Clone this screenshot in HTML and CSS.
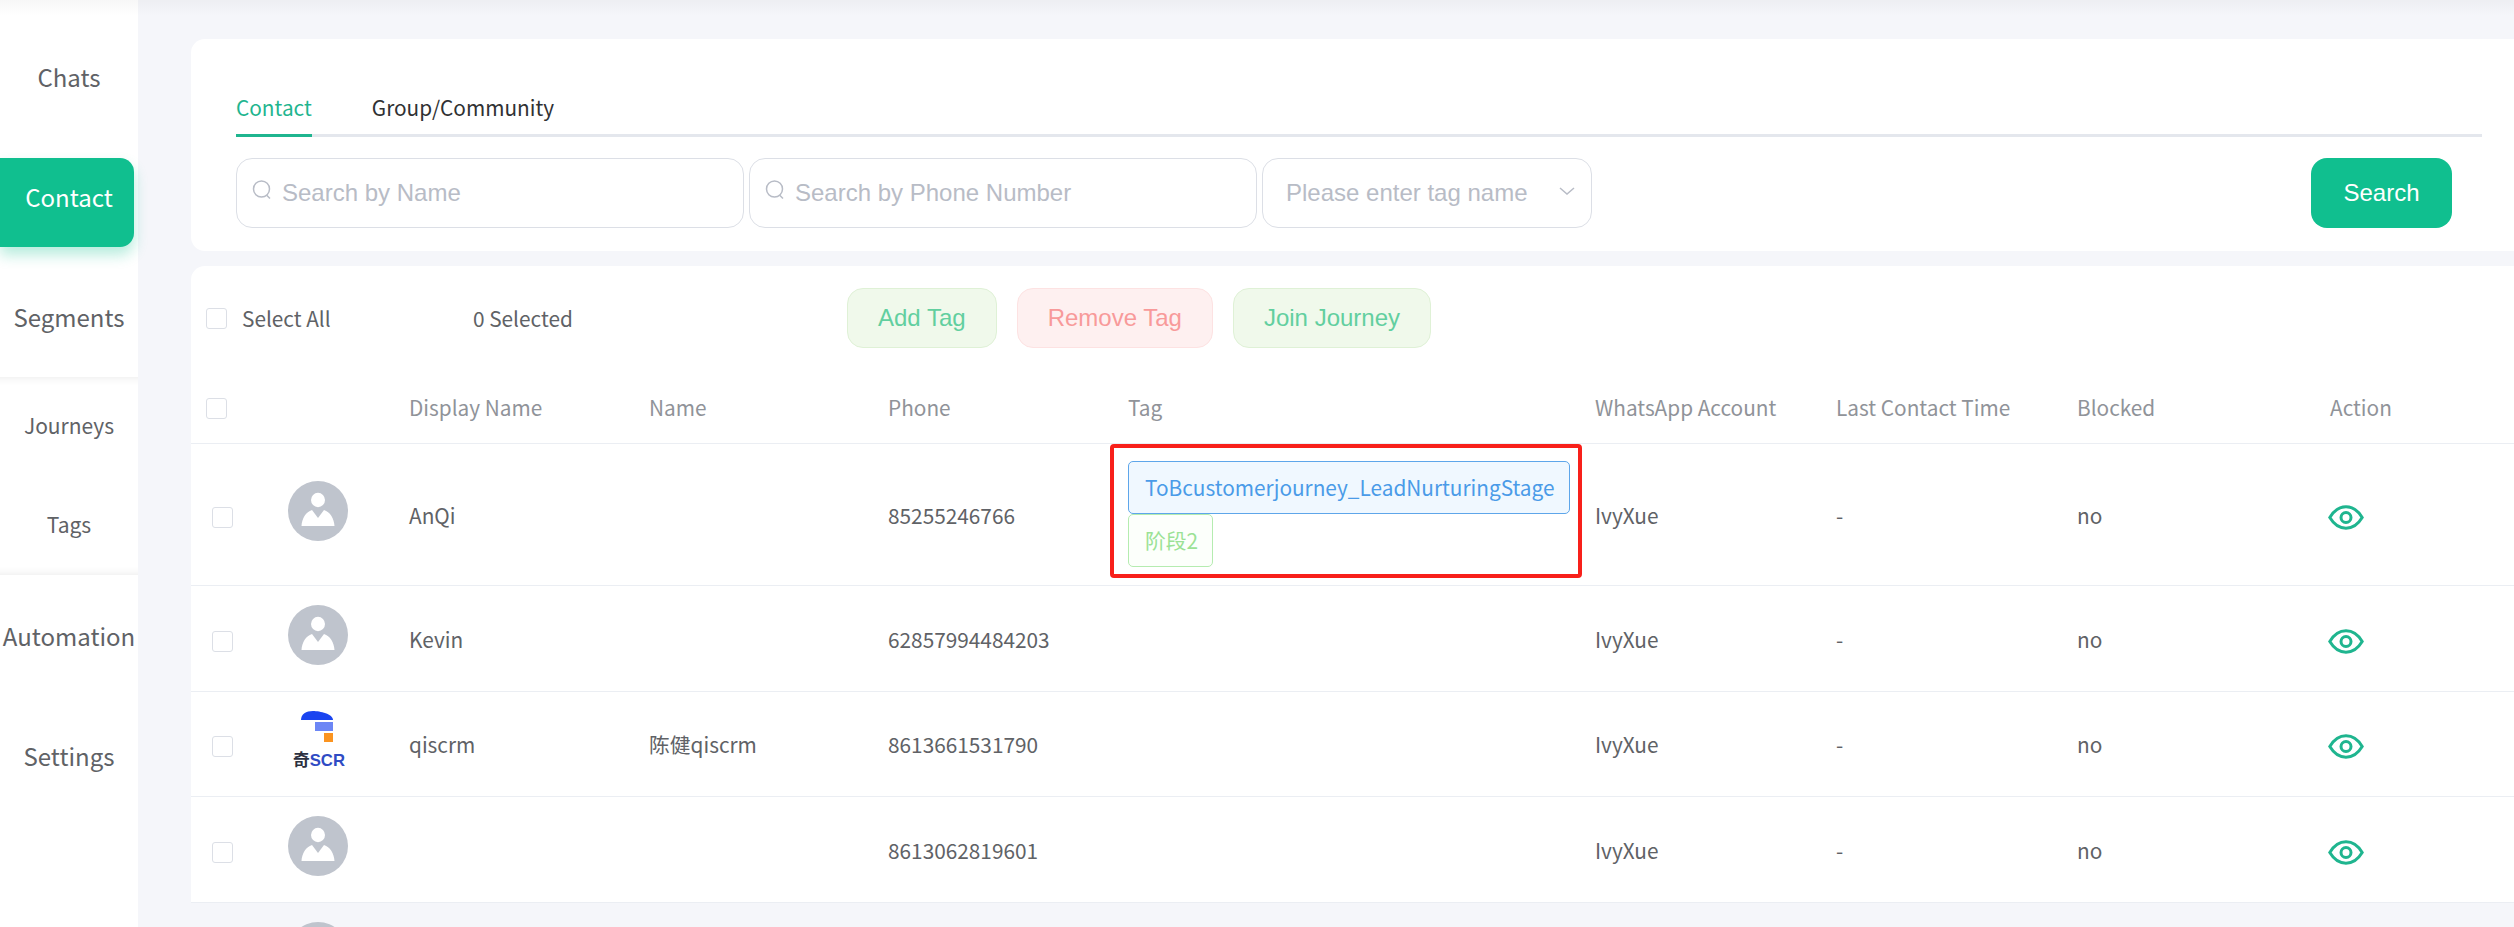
FILE: index.html
```html
<!DOCTYPE html>
<html lang="en">
<head>
  <meta charset="UTF-8" />
  <title>Contact</title>
  <link rel="stylesheet" href="styles.css">
</head>
<body>

<div class="page">
  <!-- Sidebar -->
  <nav class="sidebar">
    <div class="nav-group">
      <a class="nav-item">Chats</a>
      <a class="nav-item active">Contact</a>
      <a class="nav-item">Segments</a>
    </div>
    <div class="nav-group-sub">
      <a class="nav-sub">Journeys</a>
      <a class="nav-sub">Tags</a>
    </div>
    <div class="nav-group nav-group-last">
      <a class="nav-item">Automation</a>
      <a class="nav-item">Settings</a>
    </div>
  </nav>

  <main class="main">
    <!-- Search card -->
    <section class="search-card">
      <div class="tabs">
        <span class="tab active">Contact</span>
        <span class="tab">Group/Community</span>
      </div>
      <div class="search-row">
        <label class="field">
          <svg class="field-icon" viewBox="0 0 20 20"><ellipse cx="9.500" cy="9" rx="8" ry="8" /><path d="M14.500 15l3.500 3.500" /></svg>
          <input type="text" placeholder="Search by Name" />
        </label>
        <label class="field">
          <svg class="field-icon" viewBox="0 0 20 20"><ellipse cx="9.500" cy="9" rx="8" ry="8" /><path d="M14.500 15l3.500 3.500" /></svg>
          <input type="text" placeholder="Search by Phone Number" />
        </label>
        <div class="select">
          <span>Please enter tag name</span>
          <svg class="select-arrow" viewBox="0 0 16 8"><path d="M1 1l7 6 7-6" /></svg>
        </div>
        <button class="btn-search">Search</button>
      </div>
    </section>

    <!-- Contact list -->
    <section class="list">
      <div class="toolbar">
        <div class="select-all"><span class="check"></span>Select All</div>
        <div class="selected-count">0 Selected</div>
        <div class="actions">
          <button class="btn-soft">Add Tag</button>
          <button class="btn-soft btn-danger">Remove Tag</button>
          <button class="btn-soft">Join Journey</button>
        </div>
      </div>

      <table class="contacts">
        <colgroup>
          <col class="col-check"><col class="col-avatar"><col class="col-wide"><col class="col-name"><col class="col-wide">
          <col class="col-tag"><col class="col-account"><col class="col-account"><col class="col-blocked"><col class="col-action">
        </colgroup>
        <thead>
          <tr>
            <th><span class="check"></span></th>
            <th></th>
            <th>Display Name</th>
            <th>Name</th>
            <th>Phone</th>
            <th>Tag</th>
            <th>WhatsApp Account</th>
            <th>Last Contact Time</th>
            <th>Blocked</th>
            <th>Action</th>
          </tr>
        </thead>
        <tbody>
          <tr>
            <td><span class="check"></span></td>
            <td>
              <svg class="avatar" viewBox="0 0 60 60"><circle cx="30" cy="30" r="30" fill="#bfc4cd" /><ellipse cx="30" cy="19" rx="7" ry="7.2" fill="#fff" /><path d="M13.5 45C14 37 18 31 24 29L30 37L36 29C42 31 46 37 46.5 45Z" fill="#fff" /></svg>
            </td>
            <td>AnQi</td>
            <td></td>
            <td>85255246766</td>
            <td class="tag-cell">
              <div class="tags">
                <span class="tag">ToBcustomerjourney_LeadNurturingStage</span>
                <span class="tag tag-green">阶段2</span>
              </div>
              <div class="highlight"></div>
            </td>
            <td>IvyXue</td>
            <td>-</td>
            <td>no</td>
            <td>
              <svg class="eye" viewBox="0 0 36 25"><path d="M1.8 12.5C6 5.5 11.500 1.800 18 1.800S30 5.500 34.200 12.500C30 19.500 24.500 23.200 18 23.200S6 19.500 1.800 12.500Z" /><circle cx="18" cy="12.500" r="5" /></svg>
            </td>
          </tr>
          <tr class="row-short">
            <td><span class="check"></span></td>
            <td>
              <svg class="avatar" viewBox="0 0 60 60"><circle cx="30" cy="30" r="30" fill="#bfc4cd" /><ellipse cx="30" cy="19" rx="7" ry="7.2" fill="#fff" /><path d="M13.5 45C14 37 18 31 24 29L30 37L36 29C42 31 46 37 46.5 45Z" fill="#fff" /></svg>
            </td>
            <td>Kevin</td>
            <td></td>
            <td>62857994484203</td>
            <td></td>
            <td>IvyXue</td>
            <td>-</td>
            <td>no</td>
            <td>
              <svg class="eye" viewBox="0 0 36 25"><path d="M1.8 12.5C6 5.5 11.500 1.800 18 1.800S30 5.500 34.200 12.500C30 19.500 24.500 23.200 18 23.200S6 19.500 1.800 12.500Z" /><circle cx="18" cy="12.500" r="5" /></svg>
            </td>
          </tr>
          <tr class="row-short row-logo">
            <td><span class="check"></span></td>
            <td>
              <svg class="avatar" viewBox="0 0 60 60">
                <path d="M13 10C13 4 18 1 25 1S45 4 45 10Z" fill="#1a44f0" />
                <rect x="27" y="12" width="18" height="9" fill="#6c86f5" />
                <rect x="36" y="23" width="9" height="9" fill="#fb9420" />
                <text class="logo-text" x="5" y="56" textLength="52" lengthAdjust="spacingAndGlyphs"><tspan class="logo-dark">奇</tspan>SCR</text>
              </svg>
            </td>
            <td>qiscrm</td>
            <td>陈健qiscrm</td>
            <td>8613661531790</td>
            <td></td>
            <td>IvyXue</td>
            <td>-</td>
            <td>no</td>
            <td>
              <svg class="eye" viewBox="0 0 36 25"><path d="M1.8 12.5C6 5.5 11.500 1.800 18 1.800S30 5.500 34.200 12.500C30 19.500 24.500 23.200 18 23.200S6 19.500 1.800 12.500Z" /><circle cx="18" cy="12.500" r="5" /></svg>
            </td>
          </tr>
          <tr class="row-short">
            <td><span class="check"></span></td>
            <td>
              <svg class="avatar" viewBox="0 0 60 60"><circle cx="30" cy="30" r="30" fill="#bfc4cd" /><ellipse cx="30" cy="19" rx="7" ry="7.2" fill="#fff" /><path d="M13.5 45C14 37 18 31 24 29L30 37L36 29C42 31 46 37 46.5 45Z" fill="#fff" /></svg>
            </td>
            <td></td>
            <td></td>
            <td>8613062819601</td>
            <td></td>
            <td>IvyXue</td>
            <td>-</td>
            <td>no</td>
            <td>
              <svg class="eye" viewBox="0 0 36 25"><path d="M1.8 12.5C6 5.5 11.500 1.800 18 1.800S30 5.500 34.200 12.500C30 19.500 24.500 23.200 18 23.200S6 19.500 1.800 12.500Z" /><circle cx="18" cy="12.500" r="5" /></svg>
            </td>
          </tr>
          <tr class="row-next">
            <td></td>
            <td>
              <svg class="avatar" viewBox="0 0 60 60"><circle cx="30" cy="30" r="30" fill="#bfc4cd" /></svg>
            </td>
            <td colspan="8"></td>
          </tr>
        </tbody>
      </table>
    </section>
  </main>
</div>

</body>
</html>
```

FILE: styles.css
```css
:root {
  --green: #10bf8f;
  --green-text: #1fb58f;
  --page-bg: #f5f6fa;
  --line: #ebeef3;
  --text: #606266;
  --muted: #909399;
}

* {
  box-sizing: border-box;
}

html, body {
  height: 100%;
}

body {
  margin: 0;
  overflow: hidden;
  background: var(--page-bg);
  color: var(--text);
  font-family: "Noto Sans CJK SC", "Noto Sans", sans-serif;
}

.page {
  display: flex;
  height: 100vh;
  overflow: hidden;
}

/* top shade from the bar above the shot */
.page::before {
  content: "";
  position: absolute;
  top: 0; left: 0; right: 0;
  height: 16px;
  background: linear-gradient(rgba(0, 0, 0, 0.03), rgba(0, 0, 0, 0));
  z-index: 5;
}

/* Sidebar */
.sidebar {
  flex: 0 0 138px;
  min-width: 0;
  background: #fff;
}

.nav-group {
  display: flex;
  flex-direction: column;
  gap: 31px;
  padding: 38px 4px 10px 0;
  height: 377px;
}

.nav-group-last {
  padding-top: 22px;
  height: auto;
}

.nav-group-sub {
  height: 198px;
  box-shadow: inset 0 12px 10px -12px rgba(0, 0, 0, 0.1), inset 0 -12px 10px -12px rgba(0, 0, 0, 0.1);
}

.nav-item {
  height: 89px;
  display: flex;
  align-items: center;
  justify-content: center;
  padding: 0 0 12px 4px;
  font-size: 24px;
  white-space: nowrap;
}

.nav-item.active {
  background: var(--green);
  color: #fff;
  border-radius: 0 14px 14px 0;
  box-shadow: 0 8px 14px rgba(16, 191, 143, 0.3);
}

.nav-sub {
  height: 99px;
  display: flex;
  align-items: center;
  justify-content: center;
  padding-bottom: 3px;
  font-size: 21px;
}

/* Search card */
.main {
  flex: 1;
  min-width: 0;
  padding: 39px 0 0 53px;
}

.search-card {
  height: 212px;
  padding: 54px 32px 0 45px;
  background: #fff;
  border-radius: 14px 0 0 14px;
}

.tabs {
  display: flex;
  gap: 60px;
  border-bottom: 3px solid #e4e7ed;
}

.tab {
  line-height: 29px;
  padding-bottom: 12px;
  margin-bottom: -3px;
  font-size: 20.8px;
  color: #303133;
}

.tab.active {
  color: var(--green-text);
  border-bottom: 3px solid var(--green-text);
}

.search-row {
  display: flex;
  gap: 5px;
  margin-top: 21px;
  padding-right: 30px;
  font-family: "Liberation Sans", Arial, sans-serif;
}

.field {
  width: 508px;
  height: 70px;
  display: flex;
  align-items: center;
  padding: 0 15px;
  border: 1px solid #dcdfe6;
  border-radius: 16px;
}

.field-icon {
  flex: 0 0 20px;
  height: 20px;
  margin: -6px 10px 0 0;
  fill: none;
  stroke: #b8bcc6;
  stroke-width: 1.5;
}

.field input {
  flex: 1;
  min-width: 0;
  height: 100%;
  border: none;
  outline: none;
  padding: 0;
  background: none;
  font: 24px "Liberation Sans", Arial, sans-serif;
}

.field input::placeholder {
  color: #b8bcc6;
}

.select {
  width: 330px;
  height: 70px;
  display: flex;
  align-items: center;
  justify-content: space-between;
  padding: 0 16px 0 23px;
  border: 1px solid #dcdfe6;
  border-radius: 16px;
  font-size: 24px;
  color: #b8bcc6;
}

.select-arrow {
  width: 16px;
  height: 8px;
  margin-top: -5px;
  fill: none;
  stroke: #b8bcc6;
  stroke-width: 1.5;
}

.btn-search {
  width: 141px;
  height: 70px;
  margin-left: auto;
  padding: 0;
  border: none;
  border-radius: 16px;
  background: var(--green);
  color: #fff;
  font: 24px "Liberation Sans", Arial, sans-serif;
}

/* Contact list */
.list {
  margin-top: 15px;
}

.toolbar {
  height: 104px;
  display: flex;
  align-items: center;
  padding-left: 15px;
  background: #fff;
  border-radius: 14px 0 0 0;
  font-size: 20.8px;
}

.select-all {
  width: 267px;
  display: flex;
  align-items: center;
  gap: 15px;
}

.selected-count {
  width: 374px;
}

.actions {
  display: flex;
  gap: 20px;
}

.btn-soft {
  height: 60px;
  padding: 0 30px;
  border: 1px solid #dff1d6;
  border-radius: 16px;
  background: #f0f9eb;
  color: #62cf9f;
  font: 24px "Liberation Sans", Arial, sans-serif;
}

.btn-danger {
  border-color: #fde2e2;
  background: #fef0f0;
  color: #f89a9a;
}

.check {
  display: block;
  flex: 0 0 21px;
  width: 21px;
  height: 21px;
  background: #fff;
  border: 1px solid #dcdfe6;
  border-radius: 3px;
}

.contacts {
  width: 100%;
  table-layout: fixed;
  border-collapse: separate;
  border-spacing: 0;
  font-size: 20.8px;
}

.col-check { width: 79px; }
.col-avatar { width: 139px; }
.col-wide { width: 240px; }
.col-name { width: 239px; }
.col-tag { width: 467px; }
.col-account { width: 241px; }
.col-blocked { width: 253px; }
.col-action { width: 184px; }

.contacts th {
  height: 74px;
  padding: 0;
  background: #fff;
  border-bottom: 1px solid var(--line);
  color: var(--muted);
  font-weight: 400;
  text-align: left;
}

.contacts th .check {
  margin: 3px 0 0 15px;
}

.contacts td {
  padding: 0;
  background: #fff;
  border-bottom: 1px solid var(--line);
  vertical-align: middle;
}

.contacts td .check {
  margin: 5px 0 0 21px;
}

.row-short td {
  height: 106px;
}

.row-logo td {
  height: 105px;
}

.avatar {
  display: block;
  width: 60px;
  height: 60px;
  margin: 0 0 8px 18px;
}

.logo-text {
  font: 700 17px "Liberation Sans", "Noto Sans CJK SC", sans-serif;
  fill: #2f4bc4;
}

.logo-dark {
  fill: #2c3040;
}

.tag-cell {
  position: relative;
}

.tags {
  padding: 17px 0 18px;
  line-height: 0;
}

.tag {
  display: inline-block;
  height: 53px;
  line-height: 51px;
  padding: 0 14px 0 16px;
  border: 1px solid #5ea6ea;
  border-radius: 5px;
  background: #f0f8ff;
  color: #4a9be8;
  font-size: 20.8px;
}

.tag-green {
  border-color: #b5ecb0;
  background: #fcfffb;
  color: #9be295;
}

/* annotation drawn over the tag cell */
.highlight {
  position: absolute;
  top: 0;
  left: -18px;
  width: 472px;
  height: 134px;
  border: 4px solid #f8201a;
  border-radius: 4px;
}

.eye {
  display: block;
  width: 36px;
  height: 25px;
  margin: 5px 0 0 -2px;
  fill: none;
  stroke: #1fb58f;
  stroke-width: 3;
}

.row-next td {
  height: 106px;
  background: none;
  border-bottom: none;
  vertical-align: top;
  padding-top: 19px;
}
```
